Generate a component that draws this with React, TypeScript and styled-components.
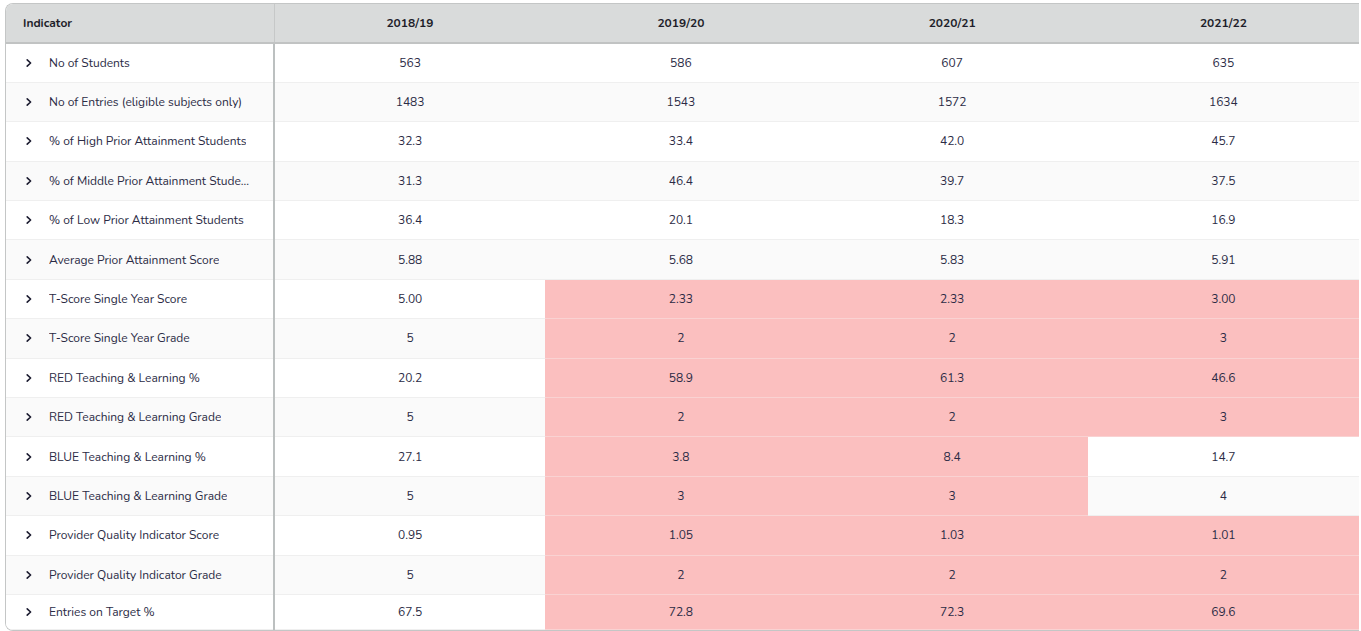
import React from 'react'
import styled, { createGlobalStyle } from 'styled-components'

const GlobalStyle = createGlobalStyle`
  html, body {
    margin: 0;
    padding: 0;
    background: #ffffff;
    overflow: hidden;
  }
  body {
    font-family: "Nunito", "Lato", "Noto Sans", sans-serif;
    color: #2b2b45;
  }
`

const Page = styled.div`
  padding: 3px 0 0 5px;
`

const Wrap = styled.div`
  width: 1353px;
  border: 1px solid #c4c6c6;
  border-right: none;
  border-radius: 8px 0 0 8px;
  overflow: hidden;
`

const Table = styled.table`
  width: 100%;
  border-collapse: collapse;
  table-layout: fixed;
  font-size: 12px;
`

const HeadCell = styled.th<{ $first?: boolean }>`
  height: 38px;
  background: #d9dbdb;
  border-bottom: 2px solid #c1c3c3;
  border-right: ${p => (p.$first ? '1px solid #c6c8c8' : 'none')};
  font-weight: 700;
  color: #1e1e2a;
  text-align: ${p => (p.$first ? 'left' : 'center')};
  padding: 0 0 0 ${p => (p.$first ? '17px' : '0')};
`

const Row = styled.tr<{ $alt: boolean; $last: boolean }>`
  height: ${p => (p.$last ? '35px' : '39.4px')};
  background: ${p => (p.$alt ? '#fafafa' : '#ffffff')};
`

const NameCell = styled.td`
  border-right: 2px solid #bcc0c0;
  border-bottom: 1px solid #efefef;
  padding: 0 0 0 18px;
  white-space: nowrap;
  overflow: hidden;
`

const NameInner = styled.div`
  display: flex;
  align-items: center;
  gap: 15px;
  overflow: hidden;
`

const Label = styled.span`
  overflow: hidden;
  text-overflow: ellipsis;
  white-space: nowrap;
  max-width: 205px;
`

const ValueCell = styled.td<{ $bad: boolean }>`
  text-align: center;
  background: ${p => (p.$bad ? '#fbbfbf' : 'transparent')};
  border-bottom: 1px solid ${p => (p.$bad ? '#f9d2d2' : '#efefef')};
`

const Chevron = () => (
  <svg width="10" height="10" viewBox="0 0 10 10" fill="none">
    <path d="M3.2 1.8 L6.6 5 L3.2 8.2" stroke="#1c1c30" strokeWidth="1.6" strokeLinecap="round" strokeLinejoin="round" />
  </svg>
)

const years = ['2018/19', '2019/20', '2020/21', '2021/22']

type Item = { name: string; values: string[]; bad?: boolean[] }

const N = [false, false, false, false]
const P = [false, true, true, true]
const Q = [false, true, true, false]

const rows: Item[] = [
  { name: 'No of Students', values: ['563', '586', '607', '635'], bad: N },
  { name: 'No of Entries (eligible subjects only)', values: ['1483', '1543', '1572', '1634'], bad: N },
  { name: '% of High Prior Attainment Students', values: ['32.3', '33.4', '42.0', '45.7'], bad: N },
  { name: '% of Middle Prior Attainment Students', values: ['31.3', '46.4', '39.7', '37.5'], bad: N },
  { name: '% of Low Prior Attainment Students', values: ['36.4', '20.1', '18.3', '16.9'], bad: N },
  { name: 'Average Prior Attainment Score', values: ['5.88', '5.68', '5.83', '5.91'], bad: N },
  { name: 'T-Score Single Year Score', values: ['5.00', '2.33', '2.33', '3.00'], bad: P },
  { name: 'T-Score Single Year Grade', values: ['5', '2', '2', '3'], bad: P },
  { name: 'RED Teaching & Learning %', values: ['20.2', '58.9', '61.3', '46.6'], bad: P },
  { name: 'RED Teaching & Learning Grade', values: ['5', '2', '2', '3'], bad: P },
  { name: 'BLUE Teaching & Learning %', values: ['27.1', '3.8', '8.4', '14.7'], bad: Q },
  { name: 'BLUE Teaching & Learning Grade', values: ['5', '3', '3', '4'], bad: Q },
  { name: 'Provider Quality Indicator Score', values: ['0.95', '1.05', '1.03', '1.01'], bad: P },
  { name: 'Provider Quality Indicator Grade', values: ['5', '2', '2', '2'], bad: P },
  { name: 'Entries on Target %', values: ['67.5', '72.8', '72.3', '69.6'], bad: P },
]

export default function App() {
  return (
    <>
      <GlobalStyle />
      <Page>
        <Wrap>
          <Table>
            <colgroup>
              <col style={{ width: 268 }} />
              <col />
              <col />
              <col />
              <col />
            </colgroup>
            <thead>
              <tr>
                <HeadCell $first>Indicator</HeadCell>
                {years.map(y => (
                  <HeadCell key={y}>{y}</HeadCell>
                ))}
              </tr>
            </thead>
            <tbody>
              {rows.map((r, i) => (
                <Row key={r.name} $alt={i % 2 === 1} $last={i === rows.length - 1}>
                  <NameCell>
                    <NameInner>
                      <Chevron />
                      <Label>{r.name}</Label>
                    </NameInner>
                  </NameCell>
                  {r.values.map((v, j) => (
                    <ValueCell key={j} $bad={!!r.bad?.[j]}>{v}</ValueCell>
                  ))}
                </Row>
              ))}
            </tbody>
          </Table>
        </Wrap>
      </Page>
    </>
  )
}
